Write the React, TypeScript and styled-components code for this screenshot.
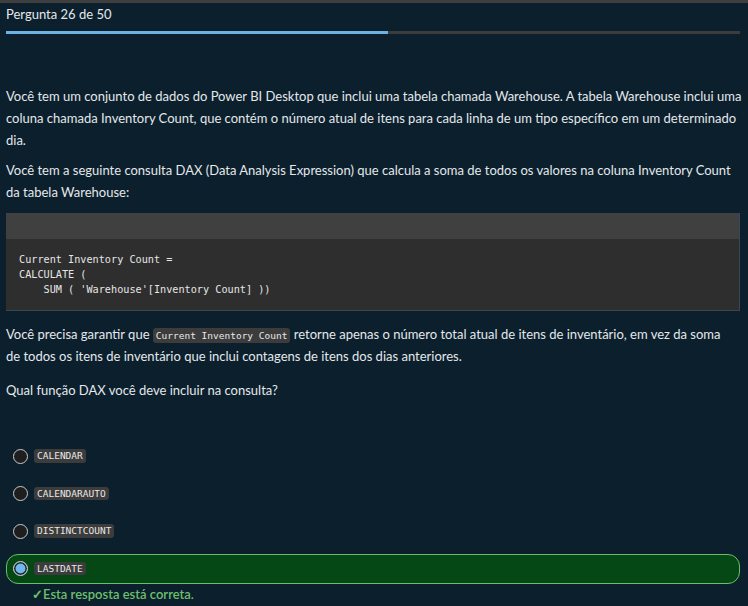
import styled, { createGlobalStyle } from "styled-components";

const GlobalStyle = createGlobalStyle`
  html, body {
    margin: 0;
    padding: 0;
    background: #0b1f2d;
  }
  body {
    font-family: Lato, "Liberation Sans", sans-serif;
    color: #e4e8ea;
  }
`;

const Page = styled.div`
  border-top: 3px solid #3f3f3f;
  padding: 0 8px 0 6px;
  min-height: 603px;
  box-sizing: border-box;
`;

const Counter = styled.div`
  font-size: 13px;
  line-height: 22px;
`;

const Progress = styled.div`
  margin-top: 6px;
  height: 3px;
  background: #3c3c3c;
`;

const ProgressFill = styled.div`
  height: 100%;
  background: #6cb2e4;
`;

const Paragraph = styled.p<{ $top: number }>`
  margin: ${(p) => p.$top}px 0 0;
  font-size: 13px;
  line-height: 22px;
  white-space: nowrap;
`;

const CodeBlock = styled.div`
  margin-top: 10px;
  background: #2e2e2e;
  border-right: 1px solid #3a4650;
  border-bottom: 1px solid #3a4650;
`;

const CodeHeader = styled.div`
  height: 26px;
  background: #404040;
`;

const CodeBody = styled.pre`
  margin: 0;
  padding: 13px 13px 13px;
  font-family: "DejaVu Sans Mono", monospace;
  font-size: 10.2px;
  line-height: 15px;
  color: #e6e6e6;
`;

const InlineCode = styled.code`
  font-family: "DejaVu Sans Mono", monospace;
  font-size: 9.5px;
  line-height: 1;
  background: #3c3c3c;
  color: #e8e8e8;
  border-radius: 3px;
  padding: 2px 3px;
`;

const Options = styled.div`
  margin-top: 40px;
  display: flex;
  flex-direction: column;
  gap: 7.5px;
`;

const Option = styled.div<{ $selected?: boolean }>`
  display: flex;
  align-items: center;
  gap: 6px;
  height: 30px;
  padding-left: 6px;
  box-sizing: border-box;
  border-radius: 12px;
  border: 1px solid ${(p) => (p.$selected ? "#6abd6b" : "transparent")};
  background: ${(p) => (p.$selected ? "#054816" : "transparent")};
`;

const Radio = styled.span<{ $selected?: boolean }>`
  width: 15px;
  height: 15px;
  box-sizing: border-box;
  border-radius: 50%;
  border: 1.5px solid #c9c9c9;
  background: ${(p) => (p.$selected ? "#70b8ec" : "#1e1e1e")};
  box-shadow: ${(p) => (p.$selected ? "inset 0 0 0 1.5px #1e1e1e" : "none")};
`;

const Feedback = styled.div`
  margin-top: 0;
  padding-left: 26px;
  font-size: 13px;
  font-weight: 600;
  line-height: 20px;
  color: #6dbf6c;
`;

const options = ["CALENDAR", "CALENDARAUTO", "DISTINCTCOUNT", "LASTDATE"];

export default function App() {
  return (
    <>
      <GlobalStyle />
      <Page>
        <Counter>Pergunta 26 de 50</Counter>
        <Progress>
          <ProgressFill style={{ width: `${(26 / 50) * 100}%` }} />
        </Progress>
        <Paragraph $top={51}>
          Você tem um conjunto de dados do Power BI Desktop que inclui uma tabela chamada Warehouse. A tabela Warehouse inclui uma
          <br />
          coluna chamada Inventory Count, que contém o número atual de itens para cada linha de um tipo específico em um determinado
          <br />
          dia.
        </Paragraph>
        <Paragraph $top={8}>
          Você tem a seguinte consulta DAX (Data Analysis Expression) que calcula a soma de todos os valores na coluna Inventory Count
          <br />
          da tabela Warehouse:
        </Paragraph>
        <CodeBlock>
          <CodeHeader />
          <CodeBody>
            {"Current Inventory Count =\nCALCULATE (\n    SUM ( 'Warehouse'[Inventory Count] ))"}
          </CodeBody>
        </CodeBlock>
        <Paragraph $top={12}>
          Você precisa garantir que <InlineCode>Current Inventory Count</InlineCode> retorne apenas o número total atual de itens de inventário, em vez da soma
          <br />
          de todos os itens de inventário que inclui contagens de itens dos dias anteriores.
        </Paragraph>
        <Paragraph $top={12}>Qual função DAX você deve incluir na consulta?</Paragraph>
        <Options>
          {options.map((o) => {
            const selected = o === "LASTDATE";
            return (
              <Option key={o} $selected={selected}>
                <Radio $selected={selected} />
                <InlineCode>{o}</InlineCode>
              </Option>
            );
          })}
        </Options>
        <Feedback>✓Esta resposta está correta.</Feedback>
      </Page>
    </>
  );
}
